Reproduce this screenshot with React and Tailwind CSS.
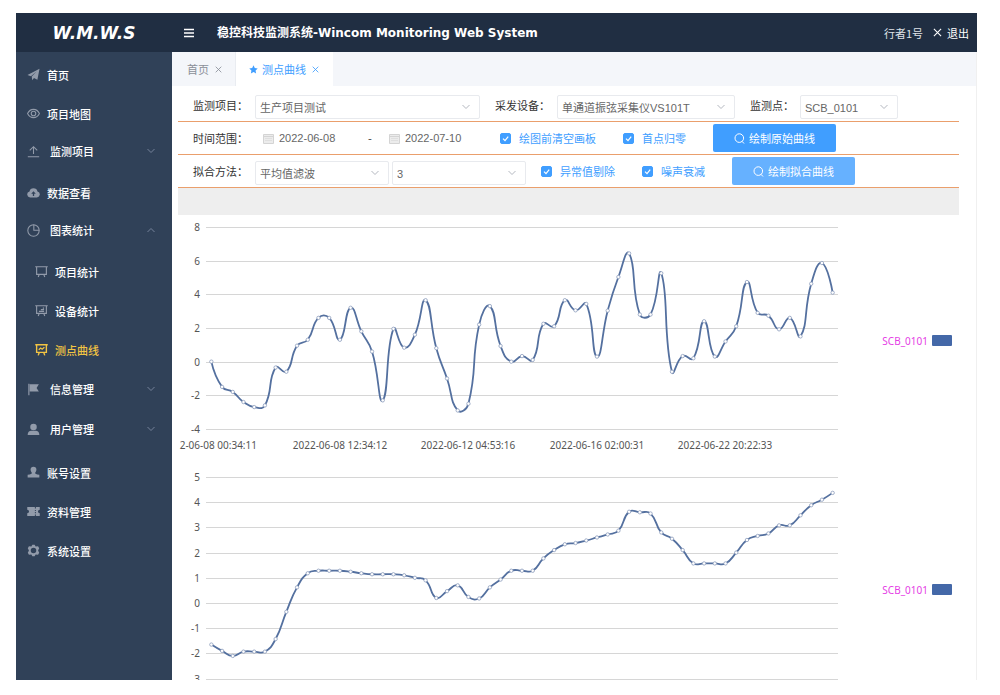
import React, { useState } from "react";
import clsx from "clsx";

// Sidebar icons, drawn on a 16x16 grid
const ICONS = {
  plane: <path fill="currentColor" d="M.6 8.600 15.400.8 12.800 14.400 8.600 12.200l-2.200 3-.6-4.600 6-6.200-7 5.800z" />,
  eye: (
    <g fill="none" stroke="currentColor" strokeWidth="1.300">
      <path d="M.7 8C2.400 4.600 5.200 2.900 8 2.900S13.600 4.600 15.300 8c-1.700 3.400-4.500 5.100-7.300 5.100S2.400 11.400.7 8z" />
      <circle cx="8" cy="8" r="2.800" />
    </g>
  ),
  upload: <path fill="none" stroke="currentColor" strokeWidth="1.300" d="M1 14.400h14M8 11V2.200M3.400 6.600 8 2l4.600 4.600" />,
  cloud: (
    <path
      fill="currentColor"
      fillRule="evenodd"
      d="M3.700 14A3.700 3.700 0 0 1 3.100 6.700A5 5 0 0 1 12.900 6.700A3.700 3.700 0 0 1 12.300 14zM7.200 12.200h1.600V9.600h2L8 6.400 5.200 9.600h2z"
    />
  ),
  pie: (
    <g fill="none" stroke="currentColor" strokeWidth="1.300">
      <circle cx="8" cy="8" r="7" />
      <path d="M8.400 1v6.800H15" />
    </g>
  ),
  board: <path fill="none" stroke="currentColor" strokeWidth="1.400" d="M.3 2.200h15.400M2 2.200v9.400h12V2.200M5.200 11.600l-1.200 3.200M10.800 11.600l1.200 3.200" />,
  boardBars: (
    <path
      fill="none"
      stroke="currentColor"
      strokeWidth="1.400"
      d="M.3 2.200h15.400M2 2.200v9.400h12V2.200M5.200 11.600l-1.200 3.200M10.800 11.600l1.200 3.200M4.800 9h6.400M7.200 7h4M9.600 5h1.600"
    />
  ),
  boardLine: (
    <path
      fill="none"
      stroke="currentColor"
      strokeWidth="1.700"
      d="M.3 2.200h15.400M2 2.200v9.400h12V2.200M5.200 11.600l-1.200 3.600M10.800 11.600l1.200 3.600M4.600 8.200l2.400-2 1.800 1.400 2.800-2.400"
    />
  ),
  flag: <path fill="currentColor" d="M1.600.8H3v14.400H1.600zM3.400 1.600h11.200l-2.800 4.400 2.800 4.400H3.400z" />,
  user: (
    <g fill="currentColor">
      <circle cx="8" cy="4.800" r="4" />
      <path d="M.8 14.800c0-3.600 2-5.200 4.400-5.200h5.600c2.400 0 4.400 1.600 4.400 5.200z" />
    </g>
  ),
  bust: <path fill="currentColor" d="M4.400 4.400a3.600 3.600 0 0 1 7.200 0c0 2-1 3.200-1.700 4.200.2 1.200 1.300 1.600 5.300 2.200v3.200H.8v-3.200c4-.6 5.100-1 5.300-2.200-.7-1-1.700-2.200-1.700-4.200z" />,
  ticket: (
    <path
      fill="currentColor"
      fillRule="evenodd"
      d="M.3 2.400h9.400v2h1.200v-2h4.800v3.400a2.200 2.200 0 0 0 0 4.400v3.400h-4.800v-2H9.700v2H.3v-3.400a2.200 2.200 0 0 0 0-4.400zM9.700 6v1.500h1.200V6zM9.700 8.700v1.500h1.200V8.700z"
    />
  ),
  gear: (
    <path
      fill="currentColor"
      fillRule="evenodd"
      d="M5.400 3.200 6.600.8h2.800l1.200 2.400 3-.4L15 5.200 13.600 8l1.400 2.800-1.400 2.400-3-.4-1.200 2.400H6.600l-1.200-2.400-3 .4L1 10.800 2.400 8 1 5.200l1.400-2.400zM8 4.600a3.400 3.400 0 1 0 0 6.800 3.400 3.400 0 0 0 0-6.800z"
    />
  ),
};

const MENU_TOP = [
  { label: "首页", icon: "plane" },
  { label: "项目地图", icon: "eye" },
];

const CHART_MENU = [
  { label: "项目统计", icon: "board" },
  { label: "设备统计", icon: "boardBars" },
  { label: "测点曲线", icon: "boardLine", active: true },
];

const MENU_BOTTOM = [
  { label: "账号设置", icon: "bust" },
  { label: "资料管理", icon: "ticket" },
  { label: "系统设置", icon: "gear" },
];

const RAW_VALUES = [
  0, -1.5, -1.8, -2.4, -2.7, -2.6, -0.35, -0.6, 0.95, 1.3, 2.6, 2.6, 1.3, 3.2, 1.8, 0.6, -2.3, 1.95, 0.83, 1.6,
  3.65, 0.8, -1, -2.9, -2.5, 2.2, 3.3, 0.93, 0, 0.33, 0.1, 2.25, 2.1, 3.65, 3.05, 3.43, 0.3, 3.03, 5.03, 6.43,
  2.8, 2.8, 5.25, -0.6, 0.33, 0.2, 2.4, 0.3, 1.2, 2.1, 4.73, 2.9, 2.73, 1.92, 2.6, 1.5, 4.63, 5.86, 4.1,
];

const FIT_VALUES = [
  -1.65, -1.9, -2.1, -1.93, -1.93, -1.93, -1.43, -0.35, 0.62, 1.18, 1.28, 1.28, 1.28, 1.24, 1.18, 1.14, 1.14, 1.14, 1.1, 1,
  0.9, 0.2, 0.47, 0.7, 0.24, 0.18, 0.62, 0.93, 1.28, 1.28, 1.28, 1.77, 2.1, 2.33, 2.38, 2.48, 2.6, 2.72, 2.87, 3.62,
  3.6, 3.55, 2.8, 2.55, 2.1, 1.57, 1.57, 1.57, 1.57, 2, 2.5, 2.66, 2.76, 3.08, 3.08, 3.48, 3.88, 4.1, 4.37,
];

const TIME_LABELS = [
  { x: 79, text: "2-06-08 00:34:11", anchor: "end" },
  { x: 162, text: "2022-06-08 12:34:12", anchor: "middle" },
  { x: 290, text: "2022-06-12 04:53:16", anchor: "middle" },
  { x: 419, text: "2022-06-16 02:00:31", anchor: "middle" },
  { x: 547, text: "2022-06-22 20:22:33", anchor: "middle" },
];

const PLOT_LEFT = 28;
const PLOT_WIDTH = 632;

// Bezier path through all points, control points weighted by segment length
const smoothPath = (pts) => {
  const dist = (a, b) => Math.hypot(a[0] - b[0], a[1] - b[1]);
  let d = `M${pts[0][0]} ${pts[0][1]}`;
  let cp0 = pts[0];
  for (let i = 1; i < pts.length; i++) {
    const p = pts[i];
    const prev = pts[i - 1];
    const next = pts[i + 1] || p;
    const ratio = dist(p, next) / (dist(p, next) + dist(p, prev));
    const vx = next[0] - prev[0];
    const vy = next[1] - prev[1];
    const isLast = i === pts.length - 1;
    const cp1 = isLast ? p : [p[0] - vx * 0.5 * (1 - ratio), p[1] - vy * 0.5 * (1 - ratio)];
    d += `C${cp0[0]} ${cp0[1]} ${cp1[0]} ${cp1[1]} ${p[0]} ${p[1]}`;
    cp0 = [p[0] + vx * 0.5 * ratio, p[1] + vy * 0.5 * ratio];
  }
  return d;
};

const Icon = ({ name, className }) => (
  <svg viewBox="0 0 16 16" className={clsx("size-[13px] shrink-0", className)} aria-hidden="true">
    {ICONS[name]}
  </svg>
);

const Chevron = ({ up, className }) => (
  <svg viewBox="0 0 10 10" className={clsx("size-[10px]", className)} aria-hidden="true">
    <path d={up ? "M1.500 7 5 3.500 8.500 7" : "M1.500 3 5 6.500 8.500 3"} fill="none" stroke="currentColor" strokeWidth="1" />
  </svg>
);

const Cross = ({ className }) => (
  <svg viewBox="0 0 10 10" className={className} aria-hidden="true">
    <path d="M1 1l8 8M9 1l-8 8" fill="none" stroke="currentColor" strokeWidth="1.200" />
  </svg>
);

const MenuLink = ({ item, nested }) => (
  <a
    href="#"
    className={clsx(
      "flex h-[39px] items-center gap-[7px]",
      nested ? "pl-[19px]" : "pl-[11px]",
      item.active ? "text-[#f2c443]" : "text-white"
    )}
  >
    <Icon name={item.icon} className={item.active ? "text-[#f2c443]" : "text-[#929baa]"} />
    {item.label}
  </a>
);

const MenuGroup = ({ label, icon, children }) => {
  const [open, setOpen] = useState(Boolean(children));
  return (
    <div>
      <button
        type="button"
        aria-expanded={open}
        onClick={() => setOpen(!open)}
        className="mb-1 flex h-9 w-full items-center gap-[10px] pr-4 pl-[11px] text-white"
      >
        <Icon name={icon} className="text-[#929baa]" />
        {label}
        <Chevron up={open} className="ml-auto text-[#75829a]" />
      </button>
      {open && children}
    </div>
  );
};

const Select = ({ id, label, options, className }) => (
  <div className={clsx("relative mt-1 h-6", className)}>
    <select
      id={id}
      aria-label={label}
      className="h-full w-full appearance-none rounded-xs border border-[#e8eaee] bg-white pt-[2px] pr-6 pl-1 font-['Liberation_Sans','Noto_Sans_CJK_SC',sans-serif] text-[11px] text-[#666]"
    >
      {options.map((o) => (
        <option key={o}>{o}</option>
      ))}
    </select>
    <Chevron className="pointer-events-none absolute top-[7px] right-[9px] text-[#b4b8c0]" />
  </div>
);

const DateField = ({ id, label, value }) => (
  <div className="ml-2 flex items-center gap-[5px]">
    <svg viewBox="0 0 11 11" className="size-[11px]" aria-hidden="true">
      <path d="M.5 1.500h10v9H.5zM.5 3.500h10" fill="#ececec" stroke="#d4d4d4" />
      <path d="M2 5.500h7M2 7.500h7" stroke="#dcdcdc" strokeWidth=".8" />
    </svg>
    <input
      id={id}
      type="text"
      aria-label={label}
      defaultValue={value}
      className="w-20 font-['Liberation_Sans',sans-serif] text-[11px] text-[#666] outline-none"
    />
  </div>
);

const Check = ({ label }) => (
  <label className="flex items-center gap-2 text-[#409eff]">
    <span className="relative size-[11px]">
      <input
        type="checkbox"
        defaultChecked
        className="peer block size-[11px] appearance-none rounded-xs border border-[#409eff] checked:bg-[#409eff]"
      />
      <svg viewBox="0 0 11 11" className="pointer-events-none absolute inset-0 hidden peer-checked:block" aria-hidden="true">
        <path d="M3 5.600l2 2 3.200-4" fill="none" stroke="#fff" strokeWidth="1.200" />
      </svg>
    </span>
    {label}
  </label>
);

const SearchButton = ({ label, className }) => (
  <button
    type="button"
    className={clsx("flex h-7 w-[123px] items-center justify-center gap-1 rounded-xs text-white", className)}
  >
    <svg viewBox="0 0 11 11" className="size-[11px]" aria-hidden="true">
      <circle cx="5.300" cy="5.100" r="4.300" fill="none" stroke="currentColor" />
      <path d="M8 8.300l2 2.200" stroke="currentColor" />
    </svg>
    {label}
  </button>
);

const Chart = ({ title, values, max, min, step, top, unit, times, legendY }) => {
  const toY = (v) => top + (max - v) * unit;
  const band = PLOT_WIDTH / values.length;
  const points = values.map((v, i) => [PLOT_LEFT + band * (i + 0.5), toY(v)]);
  const ticks = [];
  for (let v = max; v >= min; v -= step) ticks.push(v);

  return (
    <svg
      viewBox="0 0 781 245"
      role="img"
      aria-label={title}
      className="block w-full shrink-0 font-['Noto_Sans','Open_Sans',sans-serif] text-[10px]"
    >
      {ticks.map((v) => (
        <g key={v}>
          <line x1={PLOT_LEFT} x2={PLOT_LEFT + PLOT_WIDTH} y1={Math.round(toY(v)) + 0.5} y2={Math.round(toY(v)) + 0.5} stroke="#d6d6d6" />
          <text x="22" y={Math.round(toY(v)) + 4} textAnchor="end" fill="#555">
            {v}
          </text>
        </g>
      ))}
      <path d={smoothPath(points)} fill="none" stroke="#54709f" strokeWidth="1.800" />
      {points.map(([x, y]) => (
        <circle key={x} cx={x} cy={y} r="1.700" fill="#fff" stroke="#8d9dbd" strokeWidth=".8" />
      ))}
      {times &&
        TIME_LABELS.map((t) => (
          <text key={t.text} x={t.x} y="234" textAnchor={t.anchor} fill="#555">
            {t.text}
          </text>
        ))}
      {/* Legend */}
      <text x="750" y={legendY + 4} textAnchor="end" fill="#e540e5">
        SCB_0101
      </text>
      <rect x="754" y={legendY - 6} width="20" height="11" rx="1" fill="#4468a8" />
    </svg>
  );
};

const App = () => {
  return (
    <div className="h-screen overflow-hidden bg-white pt-[13px] pr-[23px] pb-[15px] pl-4 font-['Noto_Sans_CJK_SC',sans-serif] text-[11px] leading-4">
      <div className="flex h-full flex-col overflow-hidden">
        {/* Header */}
        <header className="flex h-[39px] shrink-0 items-center bg-[#202e42] text-white">
          <div className="w-[156px] text-center font-['DejaVu_Sans',sans-serif] text-[17px] font-bold italic">W.M.W.S</div>
          <button type="button" aria-label="菜单" className="ml-3">
            <svg viewBox="0 0 10 10" className="size-[10px]">
              <path d="M0 1.500h10M0 5h10M0 8.500h10" stroke="currentColor" strokeWidth="1.700" />
            </svg>
          </button>
          <h1 className="ml-[23px] font-['DejaVu_Sans','Noto_Sans_CJK_SC',sans-serif] text-[12px] font-bold">
            稳控科技监测系统-Wincom Monitoring Web System
          </h1>
          <span className="ml-auto text-[#dfe3e8]">行者1号</span>
          <button type="button" className="mr-2 ml-[10px] flex items-center gap-[5px]">
            <Cross className="size-[9px]" />
            退出
          </button>
        </header>

        <div className="flex min-h-0 flex-1">
          {/* Sidebar */}
          <nav className="w-[156px] shrink-0 bg-[#304158] pt-[3px] font-medium">
            {MENU_TOP.map((item) => (
              <MenuLink key={item.label} item={item} />
            ))}
            <MenuGroup label="监测项目" icon="upload" />
            <MenuLink item={{ label: "数据查看", icon: "cloud" }} />
            <MenuGroup label="图表统计" icon="pie">
              <div className="pb-[2px]">
                {CHART_MENU.map((item) => (
                  <MenuLink key={item.label} item={item} nested />
                ))}
              </div>
            </MenuGroup>
            <MenuGroup label="信息管理" icon="flag" />
            <MenuGroup label="用户管理" icon="user" />
            <div className="pt-[2px]">
              {MENU_BOTTOM.map((item) => (
                <MenuLink key={item.label} item={item} />
              ))}
            </div>
          </nav>

          <main className="flex min-w-0 flex-1 flex-col overflow-hidden border-r border-[#f0f0f0]">
            {/* Tabs */}
            <div className="flex h-[34px] shrink-0 bg-[#f4f6fa]">
              <button type="button" className="flex w-16 items-center gap-[6px] border-r border-[#e9ecf1] pl-[15px] text-[#8a8f98]">
                首页
                <Cross className="size-[7px]" />
              </button>
              <button type="button" className="flex w-[97px] items-center bg-white pl-[13px] text-[#409eff]">
                <svg viewBox="0 0 16 16" className="mr-1 size-[9px]" aria-hidden="true">
                  <path fill="currentColor" d="M8 .6l2.300 4.800 5.200.7-3.800 3.600.9 5.200L8 12.400l-4.600 2.500.9-5.200L.5 6.100l5.200-.7z" />
                </svg>
                测点曲线
                <Cross className="ml-[6px] size-[7px]" />
              </button>
            </div>

            <div className="mt-[3px] mr-[17px] ml-[6px]">
              {/* Query form */}
              <form className="text-[#333]">
                <div className="flex h-[33px] items-center border-b border-[#ea9f6c] pl-[15px]">
                  <label htmlFor="project" className="w-[62px]">监测项目：</label>
                  <Select id="project" className="w-[225px]" options={["生产项目测试"]} />
                  <label htmlFor="device" className="ml-[15px] w-[62px]">采发设备：</label>
                  <Select id="device" className="w-[178px]" options={["单通道振弦采集仪VS101T"]} />
                  <label htmlFor="point" className="ml-[15px] w-[50px]">监测点：</label>
                  <Select id="point" className="w-[98px]" options={["SCB_0101"]} />
                </div>
                <div className="flex h-[33px] items-center border-b border-[#ea9f6c] pl-[15px]">
                  <label htmlFor="start" className="w-[62px]">时间范围：</label>
                  <DateField id="start" value="2022-06-08" />
                  <span className="w-[22px] text-center">-</span>
                  <DateField id="end" label="结束日期" value="2022-07-10" />
                  <div className="ml-[15px] flex items-center gap-[27px]">
                    <Check label="绘图前清空画板" />
                    <Check label="首点归零" />
                    <SearchButton label="绘制原始曲线" className="bg-[#409eff]" />
                  </div>
                </div>
                <div className="flex h-[33px] items-center border-b border-[#ea9f6c] pl-[15px]">
                  <label htmlFor="method" className="w-[62px]">拟合方法：</label>
                  <Select id="method" className="w-[134px]" options={["平均值滤波"]} />
                  <Select id="window" label="窗口" className="ml-[3px] w-[134px]" options={["3", "5", "7"]} />
                  <div className="ml-[15px] flex items-center gap-[27px]">
                    <Check label="异常值剔除" />
                    <Check label="噪声衰减" />
                    <SearchButton label="绘制拟合曲线" className="bg-[#66b1ff]" />
                  </div>
                </div>
              </form>
              <div className="h-[27px] bg-[#eeeeee]" />

              {/* Charts */}
              <Chart title="原始曲线" values={RAW_VALUES} max={8} min={-4} step={2} top={12} unit={16.83} times legendY={126} />
              <Chart title="拟合曲线" values={FIT_VALUES} max={5} min={-3} step={1} top={17} unit={25.2} legendY={130} />
            </div>
          </main>
        </div>
      </div>
    </div>
  );
};

export default App;
